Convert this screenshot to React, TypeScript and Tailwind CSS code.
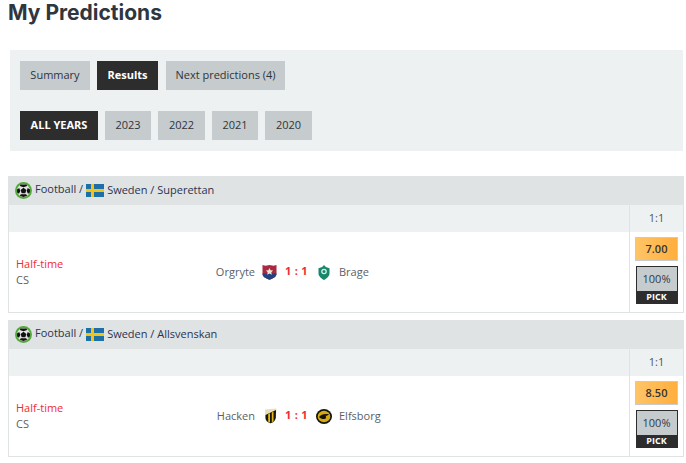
const sans = "font-['Open_Sans',sans-serif]";

function Ball() {
  return (
    <svg width="17" height="17" viewBox="0 0 17 17" className="shrink-0">
      <circle cx="8.5" cy="8.5" r="8.5" fill="#55a83d" />
      <circle cx="8.5" cy="8.5" r="6.5" fill="#e4e4e4" />
      <path d="M8.500 5.800l2.900 2.100-1.100 3.300H6.700L5.600 7.900z" fill="#111" />
      <path d="M5.500 2.500h6l.6 1.500-3.600 1.200L4.900 4zM2 7.500l2.300-1.500 1 3-1.300 2.700-1.900-1.300zM15 7.500L12.700 6l-1 3 1.300 2.700 1.900-1.300zM5.800 12.200h5.400l.9 1.600-3.600 1.200-3.600-1.200z" fill="#111" />
    </svg>
  );
}

function SwedenFlag() {
  return (
    <svg width="18" height="13" viewBox="0 0 18 13" className="shrink-0">
      <rect width="18" height="13" fill="#1d6fa8" />
      <rect x="5" width="3" height="13" fill="#f2c318" />
      <rect y="5" width="18" height="3" fill="#f2c318" />
    </svg>
  );
}

function OrgryteBadge() {
  return (
    <svg width="15" height="16" viewBox="0 0 15 16">
      <path d="M.5 1l3 .8L7.500 1l4 .8 3-.8v9c0 2.600-3.500 4.600-7 5.700C4 14.600.5 12.600.5 10z" fill="#a92a40" />
      <path d="M.5 9.500h14v.5c0 2.600-3.500 4.600-7 5.700C4 14.600.5 12.600.5 10z" fill="#22437f" />
      <path d="M7.500 4l1.100 2.300 2.500.3-1.800 1.700.5 2.500-2.300-1.200-2.300 1.200.5-2.500-1.800-1.700 2.500-.3z" fill="#efe7d2" />
    </svg>
  );
}

function BrageBadge() {
  return (
    <svg width="12" height="15" viewBox="0 0 12 15">
      <path d="M6 0l1.800 2 3.700 1.200v5.300c0 2.800-2.800 4.900-5.500 6.500C3.300 13.400.5 11.300.5 8.500V3.200L4.200 2z" fill="#16876a" />
      <circle cx="6" cy="6.500" r="2.800" fill="#d9efe6" />
      <circle cx="6" cy="6.500" r="1.500" fill="#16876a" />
    </svg>
  );
}

function HackenBadge() {
  return (
    <svg width="13" height="16" viewBox="0 0 13 16">
      <path d="M1 1.500L12.500.5 12 9.500c-.3 3-2.500 5-5.500 6-2.500-.8-5.500-2.500-5.500-6z" fill="#e9dfbf" />
      <path d="M1.500 7L12 2l-.2 7.500c-.3 3-2.400 4.800-5.300 5.800-2.300-.8-5-2.300-5-5.800z" fill="#16160f" />
      <path d="M4.200 6.200L6 5.300v9.400l-1.800-1zM7.800 4.500l1.700-.8v9.500l-1.700 1.200z" fill="#e7b817" />
    </svg>
  );
}

function ElfsborgBadge() {
  return (
    <svg width="16" height="15" viewBox="0 0 16 15">
      <ellipse cx="8" cy="7.500" rx="8" ry="7.500" fill="#14130c" />
      <ellipse cx="8" cy="7.500" rx="6.300" ry="5.700" fill="#d3aa12" />
      <path d="M3 8c2-2.500 6-3.500 10-2.500-1 .9-2.200 1.200-3.500 1.200.8 1 .8 2.300-.2 3-1.600.7-4.200.5-6.300-1.700z" fill="#14130c" />
    </svg>
  );
}

function Tab({ label, active, wide }: { label: string; active?: boolean; wide: string }) {
  return (
    <div
      className={
        "flex h-[29px] items-center justify-center text-[11px] " +
        wide +
        (active ? " bg-[#2d2d2d] font-bold text-white" : " bg-[#c6cbcd] text-[#2f343a]")
      }
    >
      {label}
    </div>
  );
}

type MatchProps = {
  league: string;
  home: string;
  away: string;
  homeBadge: React.ReactNode;
  awayBadge: React.ReactNode;
  odds: string;
};

function MatchCard({ league, home, away, homeBadge, awayBadge, odds }: MatchProps) {
  return (
    <div className="border-r border-b border-l border-[#dfe3e4]">
      <div className="-mx-px flex h-[29px] items-center gap-[3px] bg-[#dfe3e4] pl-[7px] text-[11px] text-[#2c3350]">
        <Ball />
        <span className="mb-[2px]">Football /</span>
        <SwedenFlag />
        <span>Sweden / {league}</span>
      </div>
      <div className="flex h-[27px] bg-[#eef1f2]">
        <div className="flex-1" />
        <div className="flex w-[54px] items-center justify-center border-l border-[#dfe3e4] text-[11px] text-[#4a5560]">
          1:1
        </div>
      </div>
      <div className="flex h-[80px]">
        <div className="flex w-[170px] flex-col justify-center pb-[1px] pl-[7px] text-[11px] leading-4">
          <span className="text-[#ef2b33]">Half-time</span>
          <span className="text-[#5a6268]">CS</span>
        </div>
        <div className="flex flex-1 items-center text-[11px] text-[#5a6268]">
          <span className="w-[76px] text-right">{home}</span>
          <div className="flex w-[22px] justify-end">{homeBadge}</div>
          <span className="mb-[1px] w-[39px] text-center text-[11px] font-bold tracking-[0.3px] text-[#ef2b33]">
            1 : 1
          </span>
          <div className="flex w-[16px] justify-center">{awayBadge}</div>
          <span className="ml-[7px]">{away}</span>
        </div>
        <div className="flex w-[54px] flex-col items-center gap-[5px] border-l border-[#dfe3e4] pt-[5px]">
          <div className="flex h-[24px] w-[43px] items-center justify-center border border-[#c6cbcd] bg-gradient-to-r from-[#ffc466] to-[#ffaf3c] text-[11px] font-semibold text-[#333]">
            {odds}
          </div>
          <div className="flex w-[42px] flex-col border border-[#2d2d2d]">
            <div className="flex h-[24px] items-center justify-center bg-[#c6cbcd] text-[11px] text-[#333a40]">
              100%
            </div>
            <div className="flex h-[12px] items-center justify-center bg-[#2d2d2d] text-[9px] font-bold text-white">
              PICK
            </div>
          </div>
        </div>
      </div>
    </div>
  );
}

export default function App() {
  return (
    <div className={sans + " h-[463px] w-[686px] overflow-hidden bg-white"}>
      <h1 className="ml-[8px] h-[50px] font-['Inter',sans-serif] text-[21px] leading-[25px] font-bold text-[#2f3640]">
        My Predictions
      </h1>
      <div className="mr-[3px] ml-[10px] flex h-[101px] flex-col gap-[21px] bg-[#eef1f2] px-[10px] pt-[11px]">
        <div className="flex gap-[7px]">
          <Tab label="Summary" wide="w-[70px]" />
          <Tab label="Results" active wide="w-[61px]" />
          <Tab label="Next predictions (4)" wide="ml-px w-[119px]" />
        </div>
        <div className="flex gap-[7px]">
          <Tab label="ALL YEARS" active wide="w-[78px]" />
          <Tab label="2023" wide="w-[46px]" />
          <Tab label="2022" wide="w-[47px]" />
          <Tab label="2021" wide="w-[46px]" />
          <Tab label="2020" wide="w-[47px]" />
        </div>
      </div>
      <div className="mt-[25px] mr-[2px] ml-[8px] flex flex-col gap-[7px]">
        <MatchCard
          league="Superettan"
          home="Orgryte"
          away="Brage"
          homeBadge={<OrgryteBadge />}
          awayBadge={<BrageBadge />}
          odds="7.00"
        />
        <MatchCard
          league="Allsvenskan"
          home="Hacken"
          away="Elfsborg"
          homeBadge={<HackenBadge />}
          awayBadge={<ElfsborgBadge />}
          odds="8.50"
        />
      </div>
    </div>
  );
}
